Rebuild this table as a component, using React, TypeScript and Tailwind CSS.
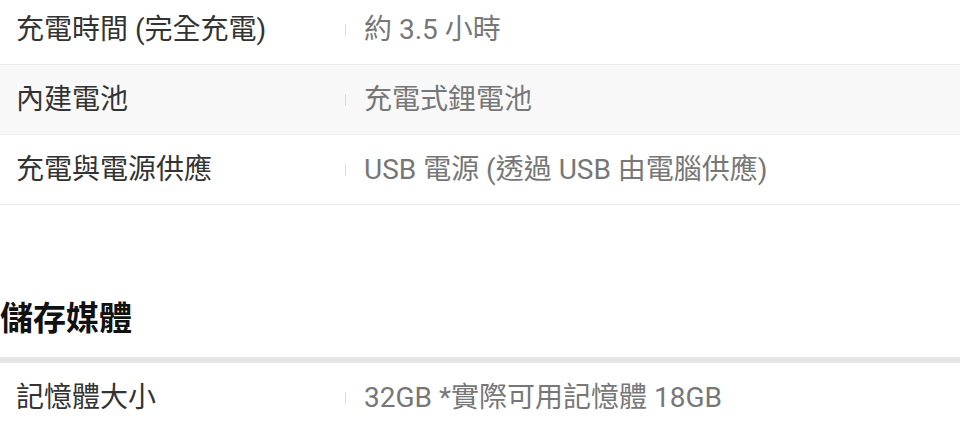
import React from "react";

const rows1 = [
  { label: "充電時間 (完全充電)", value: "約 3.5 小時", alt: false },
  { label: "內建電池", value: "充電式鋰電池", alt: true },
  { label: "充電與電源供應", value: "USB 電源 (透過 USB 由電腦供應)", alt: false },
];

function Row({ label, value, alt }: { label: string; value: string; alt?: boolean }) {
  return (
    <div
      className={`flex h-[70px] items-center border-b border-[#ececec] ${alt ? "bg-[#f8f8f8]" : "bg-white"}`}
    >
      <div className="w-[345px] shrink-0 pl-4 text-[28px] font-normal leading-none text-[#333333]">{label}</div>
      <div className="h-[12px] w-px bg-[#dcdcdc]" />
      <div className="pl-[18px] text-[28px] font-normal leading-none text-[#777777]">{value}</div>
    </div>
  );
}

export default function App() {
  return (
    <div
      className="h-[426px] w-[960px] overflow-hidden bg-white"
      style={{ fontFamily: "Roboto, 'Noto Sans CJK TC', sans-serif" }}
    >
      <div className="-mt-[5px]">
        {rows1.map((r) => (
          <Row key={r.label} {...r} />
        ))}
      </div>
      <div className="mt-[93px] flex h-[40px] items-center text-[33px] font-bold leading-none text-[#111111]">
        儲存媒體
      </div>
      <div className="mt-[19px] h-[6px] bg-[#e6e6e9]" />
      <Row label="記憶體大小" value="32GB *實際可用記憶體 18GB" />
    </div>
  );
}
